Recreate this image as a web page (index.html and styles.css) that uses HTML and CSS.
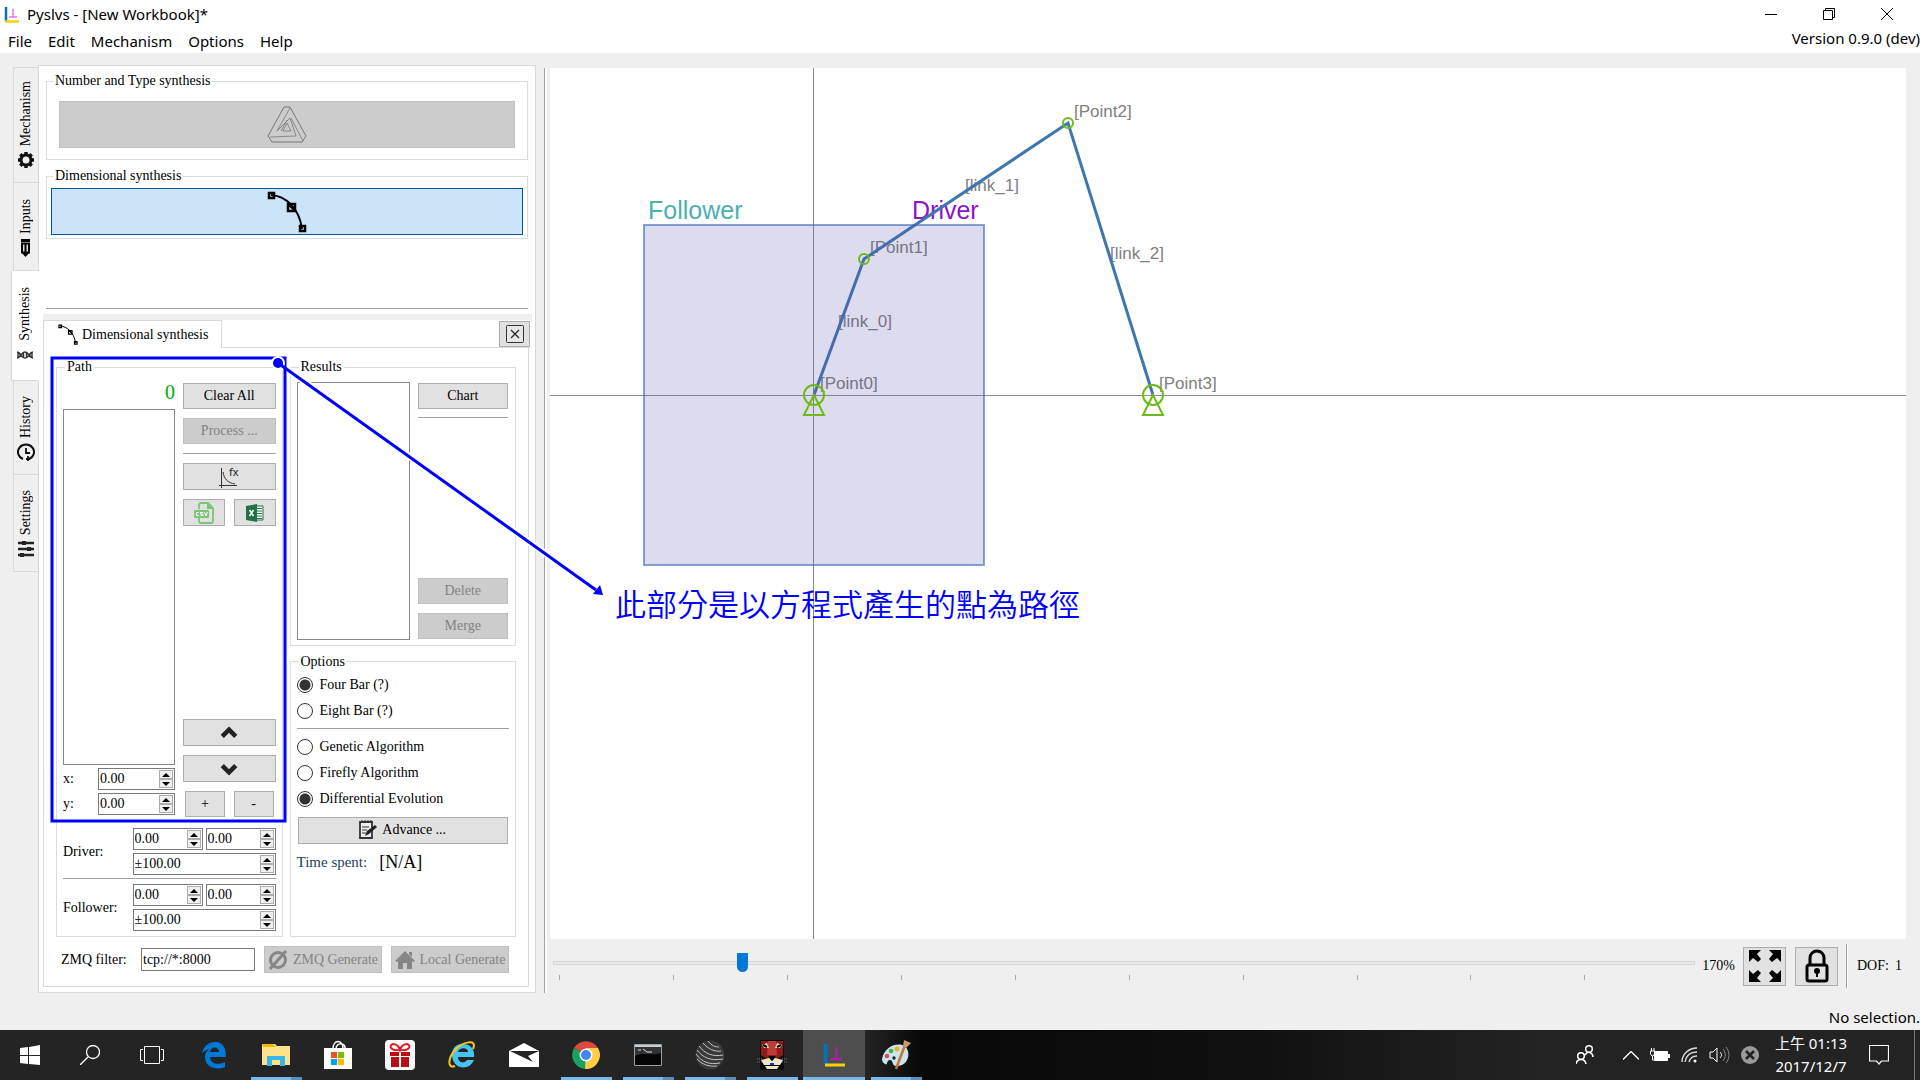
FILE: index.html
```html
<!DOCTYPE html>
<html lang="en">
<head>
<meta charset="utf-8">
<title>Pyslvs - [New Workbook]*</title>
<link rel="stylesheet" href="styles.css">
</head>
<body>
<svg class="defs" width="0" height="0" aria-hidden="true">
  <symbol id="curve" viewBox="0 0 40 42">
    <path d="M4 4C18 5 32 16 35 38" fill="none" stroke="#000" stroke-width="2"/>
    <path d="M2 2h5v5H2zM21 13h7v7h-7zM33 35h5v5h-5z" fill="none" stroke="#000" stroke-width="2.500"/>
    <path d="M21 13l7 7" stroke="#000" stroke-width="2"/>
  </symbol>
  <symbol id="arrow" viewBox="0 0 16 12"><path d="M2 9l6-6 6 6" fill="none" stroke="#222" stroke-width="4"/></symbol>
</svg>

<header class="header">
  <div class="titlebar">
    <svg class="app-icon" viewBox="0 0 16 17"><path d="M2 1v14" stroke="#0b6fb8" stroke-width="2.500"/><path d="M1 15.500h14" stroke="#f5cf0c" stroke-width="2.500"/><path d="M9 3v8M5 11h8" stroke="#f070e8" stroke-width="1.500" fill="none"/></svg>
    <h1 class="title">Pyslvs - [New Workbook]*</h1>
    <div class="window-buttons">
      <button aria-label="Minimize"><svg viewBox="0 0 14 14"><path d="M1 7.500h12" stroke="#000"/></svg></button>
      <button aria-label="Restore"><svg viewBox="0 0 14 14"><path d="M1.500 3.500h9v9h-9zM3.500 3.500v-2h9v9h-2" fill="none" stroke="#000"/></svg></button>
      <button aria-label="Close"><svg viewBox="0 0 14 14"><path d="M1 1l12 12M13 1L1 13" stroke="#000"/></svg></button>
    </div>
  </div>
  <div class="menubar">
    <nav class="menu"><a href="#">File</a><a href="#">Edit</a><a href="#">Mechanism</a><a href="#">Options</a><a href="#">Help</a></nav>
    <span class="version">Version 0.9.0 (dev)</span>
  </div>
</header>

<main class="main">
  <div class="tabs">
    <button class="tab tab-mechanism"><span>Mechanism</span><svg viewBox="0 0 18 18"><circle cx="9" cy="9" r="5" fill="none" stroke="#111" stroke-width="3"/><path d="M9 1v3M9 14v3M1 9h3M14 9h3M3.300 3.300l2 2M12.700 12.700l2 2M3.300 14.700l2-2M12.700 5.300l2-2" stroke="#111" stroke-width="3.500"/></svg></button>
    <button class="tab tab-inputs"><span>Inputs</span><svg viewBox="0 0 18 18"><path d="M4 0h9v3H4z" fill="#000"/><path d="M5 4.500h7v9H5zM8.500 5v9" fill="#ddd" stroke="#000" stroke-width="2"/><path d="M4 13h9l-4.500 5z" fill="#000"/></svg></button>
    <button class="tab tab-synthesis"><span>Synthesis</span><svg viewBox="0 0 18 18"><path d="M1 6c4 0 4 6 8 6s4-6 8-6M1 12c4 0 4-6 8-6s4 6 8 6M2 6v6M4 7v4M7.500 6.500v5M10.500 6.500v5M14 7v4M16 6v6" fill="none" stroke="#333" stroke-width="1.400"/></svg></button>
    <button class="tab tab-history"><span>History</span><svg viewBox="0 0 18 18"><path d="M6 16A8 7.500 0 1 1 12 16" fill="none" stroke="#111" stroke-width="2"/><path d="M9 5v5h4M11 13v5M9 16h4" fill="none" stroke="#111" stroke-width="1.800"/></svg></button>
    <button class="tab tab-settings"><span>Settings</span><svg viewBox="0 0 18 18"><path d="M1 3h16M1 9h16M1 15h16" stroke="#222" stroke-width="2.500"/><path d="M5 1h4v4H5zM10 7h4v4h-4zM3 13h4v4H3z" fill="#222"/></svg></button>
  </div>

  <section class="panel">
    <div class="upper">
      <fieldset class="group group-type"><legend>Number and Type synthesis</legend>
        <button class="btn big" disabled aria-label="Number and Type synthesis"><svg width="40" height="38" viewBox="0 0 40 38" fill="none" stroke="#777"><path d="M17 1h6l16 29-4 6H5l-4-6z"/><path d="M10 25l13-13 6 18-26 1M23 2l-13 23M24 12l12 23M20 17l-4 8h8zM20 14l-6 11" stroke-width=".8"/></svg></button>
      </fieldset>
      <fieldset class="group group-dim"><legend>Dimensional synthesis</legend>
        <button class="btn big active" aria-label="Dimensional synthesis"><svg width="40" height="42"><use href="#curve"/></svg></button>
      </fieldset>
      <hr class="split-h">
    </div>

    <div class="dock">
      <div class="dock-head">
        <button class="dock-tab"><svg width="20" height="21"><use href="#curve"/></svg>Dimensional synthesis</button>
        <button class="dock-close btn" aria-label="Close tab"><svg width="18" height="18" viewBox="0 0 18 18"><rect x=".5" y=".5" width="17" height="17" rx="1" fill="#e8e8e8" stroke="#333"/><path d="M5 5l8 8M13 5l-8 8" stroke="#222" stroke-width="1.200"/></svg></button>
      </div>
      <div class="dock-pane">
        <div class="columns">
          <fieldset class="group path"><legend>Path</legend>
            <div class="path-top">
              <div class="path-list">
                <output class="count">0</output>
                <div class="listbox" role="listbox" aria-label="Path points"></div>
                <div class="coord"><label for="px">x:</label><span class="spin"><input id="px" value="0.00"><span class="arrows"><button aria-label="Up"></button><button aria-label="Down"></button></span></span></div>
                <div class="coord"><label for="py">y:</label><span class="spin"><input id="py" value="0.00"><span class="arrows"><button aria-label="Up"></button><button aria-label="Down"></button></span></span></div>
              </div>
              <div class="buttons">
                <button class="btn">Clear All</button>
                <button class="btn" disabled>Process ...</button>
                <hr>
                <button class="btn tall" aria-label="Formula"><svg width="20" height="22" viewBox="0 0 20 22"><path d="M2.500 2v20M0 19.500h18" stroke="#333"/><path d="M4 6c1 7 5 11 12 12" fill="none" stroke="#333"/><text x="10" y="10" class="glyph">fx</text></svg></button>
                <div class="pair">
                  <button class="btn tall" aria-label="Import CSV"><svg width="20" height="22" viewBox="0 0 20 22"><path d="M5 7V3q0-2 2-2h7l5 5v13q0 2-2 2H7q-2 0-2-2v-3" fill="none" stroke="#7cc576" stroke-width="1.800"/><path d="M13 1v6h6z" fill="#7cc576"/><rect x="0" y="8" width="15" height="8" rx="1" fill="#7cc576"/><path d="M5 10.500H2.500v3H5M9 10.500H6.500V12H9v1.500H6.500M10.500 10l1.500 4 1.500-4" fill="none" stroke="#fff" stroke-width="1"/></svg></button>
                  <button class="btn tall" aria-label="Import Excel"><svg width="20" height="20" viewBox="0 0 20 20"><path d="M10 3h8v14h-8z" fill="#fff" stroke="#217346"/><path d="M12 5.500h5M12 8h5M12 10.500h5M12 13h5M12 15.500h5" stroke="#217346"/><path d="M1 3l11-2v18L1 17z" fill="#217346"/><path d="M4.500 7l4 6M8.500 7l-4 6" stroke="#fff" stroke-width="1.500"/></svg></button>
                </div>
                <span class="spring"></span>
                <button class="btn tall" aria-label="Move up"><svg width="18" height="14"><use href="#arrow"/></svg></button>
                <button class="btn tall" aria-label="Move down"><svg class="flip" width="18" height="14"><use href="#arrow"/></svg></button>
                <div class="pair narrow"><button class="btn">+</button><button class="btn">-</button></div>
              </div>
            </div>
            <div class="range">
              <label for="dx">Driver:</label>
              <div class="range-fields">
                <span class="spin"><input id="dx" value="0.00"><span class="arrows"><button aria-label="Up"></button><button aria-label="Down"></button></span></span>
                <span class="spin"><input aria-label="Driver y" value="0.00"><span class="arrows"><button aria-label="Up"></button><button aria-label="Down"></button></span></span>
                <span class="spin wide"><input aria-label="Driver range" value="±100.00"><span class="arrows"><button aria-label="Up"></button><button aria-label="Down"></button></span></span>
              </div>
            </div>
            <hr>
            <div class="range">
              <label for="fx">Follower:</label>
              <div class="range-fields">
                <span class="spin"><input id="fx" value="0.00"><span class="arrows"><button aria-label="Up"></button><button aria-label="Down"></button></span></span>
                <span class="spin"><input aria-label="Follower y" value="0.00"><span class="arrows"><button aria-label="Up"></button><button aria-label="Down"></button></span></span>
                <span class="spin wide"><input aria-label="Follower range" value="±100.00"><span class="arrows"><button aria-label="Up"></button><button aria-label="Down"></button></span></span>
              </div>
            </div>
          </fieldset>

          <div class="side">
            <fieldset class="group results"><legend>Results</legend>
              <div class="results-body">
                <div class="listbox" role="listbox" aria-label="Results"></div>
                <div class="buttons">
                  <button class="btn">Chart</button>
                  <hr>
                  <span class="spring"></span>
                  <button class="btn" disabled>Delete</button>
                  <button class="btn" disabled>Merge</button>
                </div>
              </div>
            </fieldset>
            <fieldset class="group options"><legend>Options</legend>
              <div class="radios">
                <label><input type="radio" name="bar" checked>Four Bar (?)</label>
                <label><input type="radio" name="bar">Eight Bar (?)</label>
              </div>
              <hr>
              <div class="radios">
                <label><input type="radio" name="alg">Genetic Algorithm</label>
                <label><input type="radio" name="alg">Firefly Algorithm</label>
                <label><input type="radio" name="alg" checked>Differential Evolution</label>
              </div>
              <button class="btn tall advance"><svg width="18" height="20" viewBox="0 0 18 20"><path d="M1 2h12v16H1z" fill="#eee" stroke="#333" stroke-width="1.800"/><path d="M3 0v3M6 0v3M9 0v3M12 0v3M3 7h7M3 10h5M3 13h4" stroke="#333"/><path d="M6 16l2-5 8-6 2 2-8 7z" fill="#222"/></svg>Advance ...</button>
              <div class="time"><span>Time spent:</span><output>[N/A]</output></div>
            </fieldset>
          </div>
        </div>
        <div class="zmq">
          <label for="zmq">ZMQ filter:</label>
          <input id="zmq" value="tcp://*:8000">
          <button class="btn tall" disabled><svg width="20" height="20" viewBox="0 0 20 20"><circle cx="10" cy="10" r="7.500" fill="none" stroke="#868686" stroke-width="3"/><path d="M2 19L18 1" stroke="#868686" stroke-width="3"/></svg>ZMQ Generate</button>
          <button class="btn tall" disabled><svg width="20" height="20" viewBox="0 0 20 20"><path d="M0 11L10 1l10 10-2 1-8-8-8 8zM3 11l7-7 7 7v8h-5v-6H8v6H3zM14 2h3v5l-3-3z" fill="#868686"/></svg>Local Generate</button>
        </div>
      </div>
    </div>
  </section>

  <div class="splitter"></div>

  <section class="work">
    <div class="canvas">
      <svg width="100%" height="100%" class="drawing">
        <path d="M263.500 0V871" stroke="#8c8c8c"/>
        <line x1="0" y1="327.500" x2="100%" y2="327.500" stroke="#8c8c8c"/>
        <text x="98" y="151" class="area follower">Follower</text>
        <text x="362" y="151" class="area driver">Driver</text>
        <g class="names"><text x="270" y="321">[Point0]</text><text x="320" y="185">[Point1]</text><text x="524" y="49">[Point2]</text><text x="609" y="321">[Point3]</text><text x="288" y="259">[link_0]</text><text x="415" y="123">[link_1]</text><text x="560" y="191">[link_2]</text></g>
        <g class="links"><path d="M264 327L314 191L518 55L603 327"/></g>
        <rect x="94" y="157" width="340" height="340" class="region"/>
        <g class="joints"><circle cx="314" cy="191" r="5"/><circle cx="518" cy="55" r="5"/><circle cx="264" cy="327" r="10"/><circle cx="603" cy="327" r="10"/><path d="M264 327l-10 20h20zM603 327l-10 20h20z"/></g>
      </svg>
    </div>
    <div class="view-bar">
      <div class="zoom">
        <input type="range" min="0" max="1000" value="162" aria-label="Zoom">
        <div class="ticks"><i></i><i></i><i></i><i></i><i></i><i></i><i></i><i></i><i></i><i></i></div>
      </div>
      <span class="percent">170%</span>
      <button class="btn view" aria-label="Zoom to fit"><svg width="32" height="32" viewBox="0 0 32 32"><path d="M0 0h12L8 4l4 5-3 3-5-4-4 4zM32 0v12l-4-4-5 4-3-3 4-5-4-4zM0 32V20l4 4 5-4 3 3-4 5 4 4zM32 32H20l4-4-4-5 3-3 5 4 4-4z"/></svg></button>
      <button class="btn view" aria-label="Lock"><svg width="24" height="34" viewBox="0 0 24 34"><rect x="2" y="16" width="20" height="16" rx="2" fill="none" stroke="#000" stroke-width="3"/><path d="M5 16V9a7 7 0 0 1 14 0v7" fill="none" stroke="#000" stroke-width="3"/><circle cx="12" cy="22" r="3"/><path d="M11 23h2v5h-2z"/></svg></button>
      <span class="vline"></span>
      <span class="dof"><span>DOF:</span><span>1</span></span>
    </div>
  </section>
</main>

<div class="status">No selection.</div>

<footer class="taskbar">
  <button class="task sys" aria-label="Start"><svg width="20" height="20" viewBox="0 0 20 20"><path d="M0 3l8-1v8H0zM9 2l11-2v10H9zM0 11h8v8l-8-1zM9 11h11v9L9 19z" fill="#fff"/></svg></button>
  <button class="task sys" aria-label="Search"><svg width="20" height="20" viewBox="0 0 20 20"><circle cx="13" cy="7" r="6.500" fill="none" stroke="#fff" stroke-width="1.300"/><path d="M8 12l-8 8" stroke="#fff" stroke-width="1.300"/></svg></button>
  <button class="task sys view-task" aria-label="Task view"><svg width="24" height="18" viewBox="0 0 24 18"><path d="M4.500.5h15v17h-15zM3 3.500H.5v11H3M21 3.500h2.500v11H21" fill="none" stroke="#fff"/></svg></button>
  <button class="task" aria-label="Edge"><svg width="26" height="28" viewBox="0 0 26 28"><path d="M1 13C2 5 8 1 14 1c8 0 11 6 11 15H9c0 8 10 8 15 5v5C15 30 4 26 4 16c0-5 3-7 5-8-5 1-7 3-8 5zm8-2h9c0-6-8-6-9 0z" fill="#0078d7"/></svg></button>
  <button class="task open many" aria-label="Explorer"><svg width="28" height="24" viewBox="0 0 28 24"><path d="M0 1h13l2 2h13v19H0z" fill="#fde28c"/><path d="M0 1h11l3 3H1z" fill="#f0b90b"/><path d="M5 23V13h18v10h-5v-6h-8v6z" fill="#38b6ea"/></svg></button>
  <button class="task" aria-label="Store"><svg width="30" height="30" viewBox="0 0 30 30"><path d="M10 9c0-10 10-10 10 0M13 9c0-7 10-7 9 0" fill="none" stroke="#fff" stroke-width="1.500"/><path d="M1 8h28v21H1z" fill="#fff"/><path d="M8 12h6v6H8z" fill="#f25022"/><path d="M15 12h6v6h-6z" fill="#7fba00"/><path d="M8 19h6v6H8z" fill="#00a4ef"/><path d="M15 19h6v6h-6z" fill="#ffb900"/></svg></button>
  <button class="task" aria-label="Gift"><svg width="30" height="30" viewBox="0 0 30 30"><rect width="30" height="30" rx="4" fill="#fff"/><path d="M5 12h9v4H5zM16 12h9v4h-9zM6 17h8v10H6zM16 17h8v10h-8z" fill="#b80f14"/><path d="M15 10C4 11 4 5 8 4c4 0 6 3 7 6 1-3 3-6 7-6 4 1 4 7-7 6z" fill="none" stroke="#e01c20" stroke-width="2"/></svg></button>
  <button class="task" aria-label="Internet Explorer"><svg width="30" height="30" viewBox="0 0 30 30"><path d="M5 15C5 7 10 4 16 4c8 0 12 6 11 13H11c0 6 7 7 9 3h7c-5 12-22 9-22-5zm6-3h10c0-5-9-5-10 0z" fill="#45c3f3"/><path d="M26 9C31-2 15 2 8 10S0 29 8 26" fill="none" stroke="#f8c51a" stroke-width="2"/></svg></button>
  <button class="task" aria-label="Mail"><svg width="30" height="24" viewBox="0 0 30 24"><path d="M0 8L15 0l15 8v16H0z" fill="#fff"/><path d="M0 8h30l-11 5 5 6L1 8z" fill="#232323"/></svg></button>
  <button class="task open" aria-label="Chrome"><svg width="28" height="28" viewBox="0 0 28 28"><path d="M14 14L2 7a14 14 0 0 1 24 0z" fill="#dd4b3e"/><path d="M14 14L2 7a14 14 0 0 0 11 21l6-11z" fill="#1aa260"/><path d="M14 14L13 28A14 14 0 0 0 26 7H14z" fill="#ffce44"/><circle cx="14" cy="14" r="6.500" fill="#fff"/><circle cx="14" cy="14" r="5" fill="#4285f4"/></svg></button>
  <button class="task open many" aria-label="Terminal"><svg width="28" height="22" viewBox="0 0 28 22"><path d="M.5.5h27v21H.5z" fill="#050505" stroke="#9aa3a8"/><path d="M1 2h26" stroke="#c5d0d6" stroke-width="2"/><path d="M1 21V12C8 8 18 12 27 9V3H1z" fill="#333"/><path d="M4 6h3M9 5l4 3h5" stroke="#ddd" fill="none"/></svg></button>
  <button class="task open many" aria-label="Sphere"><svg width="30" height="30" viewBox="0 0 30 30"><circle cx="15" cy="15" r="14.500" fill="#3a3a3a"/><path d="M8 3c5 6 12 9 18 8M4 6c6 8 14 11 24 9M2 10c6 8 14 11 26 9M1 14c6 8 13 11 24 9M2 19c5 5 11 8 20 7M13 1c4 5 7 6 11 6" fill="none" stroke="#c4c4c4"/></svg></button>
  <button class="task open" aria-label="Tiger"><svg width="30" height="30" viewBox="0 0 30 30"><path d="M3 0h24v30H3z" fill="#080808"/><path d="M4 1h22v14l-6 4H10l-6-4z" fill="#8f1d1d"/><path d="M11 1h8l1 14h-10z" fill="#bd3b39"/><path d="M5 5l5-2 2 5H7zM25 5l-5-2-2 5h5z" fill="#e8dcae"/><path d="M6 5l4 2M24 5l-4 2" stroke="#000" stroke-width="2"/><path d="M4 20l8-2 3 3 3-3 8 2-3 5H7zM8 26h14l-2 3H10z" fill="#eee6c8"/><path d="M11 16h8l-4 5z"/><path d="M13 23h4v2h-4z" fill="#13c"/><path d="M0 19h5M0 22h5M25 19h5M25 22h5" stroke="#777" stroke-dasharray="1 1"/></svg></button>
  <button class="task open current many" aria-label="Pyslvs"><svg width="24" height="26" viewBox="0 0 24 26"><path d="M3.500 2v20" stroke="#0670b8" stroke-width="4"/><path d="M14.500 5v12M8 17h12" stroke="#b21cae" stroke-width="2"/><path d="M3 23h20" stroke="#f5cf0c" stroke-width="3"/></svg></button>
  <button class="task open many" aria-label="Paint"><svg width="30" height="30" viewBox="0 0 30 30"><path d="M1 19C3 9 12 3 21 5c10 3 8 20-4 21-7 1-4-6-8-6s-2 6-5 4c-2-1-3-3-3-5z" fill="#c9e4f2"/><circle cx="6" cy="16" r="2.300" fill="#dc4a4a"/><circle cx="10" cy="11" r="2.300" fill="#45ad46"/><circle cx="16" cy="9" r="2.500" fill="#f5ac1e"/><circle cx="13" cy="18" r="1.700" fill="#222"/><path d="M15 29L24 5" stroke="#cc7429" stroke-width="2.500"/><path d="M22 6l1-6 7 3-5 5z" fill="#c69c6d"/></svg></button>
  <span class="spring"></span>
  <div class="tray">
    <svg class="people" width="18" height="20" viewBox="0 0 18 20" fill="none" stroke="#fff" stroke-width="1.500"><circle cx="13" cy="4" r="3.300"/><circle cx="5" cy="11" r="3.300"/><path d="M0 19c1-6 9-6 10 0M9 10c3-5 8-2 8 2"/></svg>
    <svg class="chev" width="16" height="9" viewBox="0 0 16 9" fill="none" stroke="#fff" stroke-width="1.300"><path d="M0 8.500l8-8 8 8"/></svg>
    <svg width="20" height="14" viewBox="0 0 20 14"><path d="M4.500 3.500h13v9h-13z" fill="#fff" stroke="#fff"/><path d="M18 6h2v4h-2z" fill="#fff"/><path d="M.5 3h4v3L3 8H2L.5 6zM1.500 0v3M4 0v3M2.500 8v4h2" fill="#232323" stroke="#fff"/></svg>
    <svg width="17" height="16" viewBox="0 0 17 16" fill="none" stroke="#ddd" stroke-width="1.400"><path d="M1 15C1 7 8 1 16 1M4 15C5 9 9 5 16 5M8 15c1-4 4-6 8-6"/><circle cx="14" cy="14" r="1.500" fill="#fff" stroke="none"/></svg>
    <svg width="21" height="18" viewBox="0 0 21 18" fill="none" stroke="#fff"><path d="M1 6h3l4-4v14l-4-4H1z"/><path d="M11 6c2 2 2 4 0 6"/><path d="M14 3c3 4 3 8 0 12M17 1c4 5 4 11 0 16" stroke="#888"/></svg>
    <svg width="18" height="18" viewBox="0 0 18 18"><circle cx="9" cy="9" r="9" fill="#9a9a9a"/><path d="M5 5l8 8M13 5l-8 8" stroke="#222" stroke-width="2.500"/></svg>
    <div class="clock"><span>上午 01:13</span><span>2017/12/7</span></div>
    <svg class="notice" width="20" height="20" viewBox="0 0 20 20"><path d="M.5.500h19v15.500h-7l-2.500 3-2.500-3h-7z" fill="none" stroke="#fff" stroke-width="1.200"/></svg>
  </div>
  <span class="show-desktop"></span>
</footer>

<svg class="annotation" width="1100" height="840">
  <path d="M278 363L594 588" stroke="#fff" stroke-width="7"/>
  <rect x="52" y="358" width="233" height="463" fill="none" stroke="#00f" stroke-width="3"/>
  <circle cx="278" cy="363" r="7" fill="#fff"/>
  <path d="M278 363L596 590" stroke="#00f" stroke-width="3"/>
  <circle cx="278" cy="363" r="5" fill="#00f"/>
  <path d="M603 595l-10-1 7-9z" fill="#00f"/>
  <text x="615" y="616" class="note">此部分是以方程式產生的點為路徑</text>
</svg>
</body>
</html>
```
FILE: styles.css
```css
* { box-sizing: border-box; }
body {
  margin: 0;
  min-height: 100vh;
  display: flex;
  flex-direction: column;
  position: relative;
  background: #efefef;
  color: #000;
  font: 14px/18px "Liberation Serif", serif;
}
button, input { font: inherit; color: inherit; }
button { padding: 0; border: 0; background: none; }
svg { flex: none; display: block; }
.defs { position: absolute; }
.spring { flex: 1; }
hr { width: 100%; height: 1px; margin: 0; border: 0; background: #a0a0a0; }

/* Title and menu */
.header {
  background: #fff;
  height: 53px;
  font: 15px/20px "Noto Sans", sans-serif;
}
.titlebar { display: flex; align-items: center; height: 28px; padding-left: 4px; }
.app-icon { width: 16px; height: 17px; }
.title { flex: 1; margin: 0 0 0 7px; font-size: 15px; font-weight: 400; }
.window-buttons { display: flex; padding-right: 4px; }
.window-buttons button { width: 58px; height: 28px; display: grid; place-items: center; }
.window-buttons svg { width: 14px; height: 14px; }
.menubar { display: flex; align-items: flex-start; justify-content: space-between; }
.menu { display: flex; gap: 16px; padding: 3px 8px; }
.menu a { color: inherit; text-decoration: none; }

/* Main area */
.main { flex: 1; display: flex; padding: 12px 14px 12px 11px; }
.tabs { display: flex; flex-direction: column; width: 28px; padding-top: 2px; margin-right: -1px; position: relative; }
.tab {
  display: flex;
  flex-direction: column;
  justify-content: flex-end;
  align-items: center;
  gap: 5px;
  margin-left: 2px;
  padding-bottom: 13px;
  background: #efefef;
  border: 1px solid #d9d9d9;
  border-top-width: 0;
}
.tab span { writing-mode: vertical-rl; transform: rotate(180deg); line-height: 18px; }
.tab svg { width: 18px; height: 18px; }
.tab-mechanism { height: 116px; border-top-width: 1px; }
.tab-inputs { height: 88px; }
.tab-synthesis { height: 110px; margin-left: 0; background: #fff; border-right-color: #fff; padding-bottom: 16px; }
.tab-history { height: 94px; }
.tab-settings { height: 97px; }

.panel {
  display: flex;
  flex-direction: column;
  width: 498px;
  padding: 6px 3px 5px 4px;
  background: #fff;
  border: 1px solid #d9d9d9;
}
.upper { padding: 0 4px 5px 3px; }
.group { min-width: 0; margin: 0; border: 1px solid #dcdcdc; }
.group legend { margin-left: 2px; padding: 0 2px; line-height: 18px; }
.group-type { padding: 11px 12px; }
.group-type legend { margin-left: -6px; }
.group-dim { margin-top: 7px; padding: 3px 4px; }
.split-h { margin-top: 69px; }

.btn {
  display: flex;
  align-items: center;
  justify-content: center;
  gap: 5px;
  height: 26px;
  background: #e1e1e1;
  border: 1px solid #adadad;
}
.btn:disabled { background: #ccc; border-color: #bfbfbf; color: #838383; }
.btn.tall { height: 27px; }
.btn.big { width: 100%; height: 47px; }
.btn.active { background: #cce4f7; border-color: #005499; }

/* Docked tab */
.dock { flex: 1; display: flex; flex-direction: column; padding: 6px 3px 0 0; background: linear-gradient(#efefef 6px, #fff 6px); }
.dock-head { display: flex; justify-content: space-between; height: 28px; margin-right: -1px; position: relative; margin-bottom: -1px; }
.dock-tab {
  display: flex;
  align-items: center;
  gap: 4px;
  width: 179px;
  padding-left: 14px;
  background: #fff;
  border: 1px solid #d9d9d9;
  border-bottom: 0;
}
.dock-close { width: 31px; margin-top: 1px; }
.dock-pane {
  flex: 1;
  display: flex;
  flex-direction: column;
  gap: 9px;
  padding: 10px 12px 13px;
  border: 1px solid #d9d9d9;
}
.columns { flex: 1; display: grid; grid-template-columns: minmax(0, 1fr) minmax(0, 1fr); gap: 7px; }
.path { display: flex; flex-direction: column; padding: 7px 6px 5px; }
.path-top { flex: 1; display: flex; gap: 8px; margin-bottom: 11px; }
.path-list { width: 112px; display: flex; flex-direction: column; gap: 3px; padding-bottom: 2px; }
.count { height: 23px; text-align: right; font-size: 20px; line-height: 18px; color: #00aa00; }
.listbox { flex: 1; background: #fff; border: 1px solid #828790; }
.buttons { flex: 1; display: flex; flex-direction: column; gap: 9px; }
.pair { display: grid; grid-template-columns: 1fr 1fr; gap: 9px; }
.narrow { padding: 0 2px; }
.glyph { font: 11px "Noto Sans", sans-serif; fill: #222; }
.coord { display: flex; justify-content: space-between; align-items: center; }
.coord .spin { width: 77px; }
.flip { transform: rotate(180deg); }

.spin { display: flex; height: 22px; background: #fff; border: 1px solid #7a7a7a; }
.spin input { flex: 1; width: 0; min-width: 0; padding: 0 1px; border: 0; background: none; }
.arrows { display: flex; flex-direction: column; padding: 1px; width: 16px; }
.arrows button { flex: 1; display: grid; place-items: center; background: #f0f0f0; border: 1px solid #adadad; }
.arrows button::before { content: ""; border: 4px solid transparent; border-top-width: 0; border-bottom-color: #000; }
.arrows button:last-child::before { transform: rotate(180deg); }
.range { display: flex; align-items: center; justify-content: space-between; }
.range-fields { display: grid; grid-template-columns: 1fr 1fr; gap: 3px; width: 143px; }
.wide { grid-column: span 2; }
.range + hr { margin: 3px 0 5px; }

.side { display: flex; flex-direction: column; gap: 7px; }
.side .group { flex: 1; }
.results { display: flex; flex-direction: column; padding: 6px 6px 5px; }
.results-body { flex: 1; display: grid; grid-template-columns: 113px 1fr; gap: 7px; }
.results-body .buttons { padding: 1px; }
.results-body hr { margin-top: -1px; }
.options { display: flex; flex-direction: column; padding: 4px 6px; }
.radios { display: flex; flex-direction: column; gap: 6px; }
.radios label { display: flex; align-items: center; gap: 7px; height: 20px; }
.radios input {
  appearance: none;
  width: 16px;
  height: 16px;
  margin: 0;
  border: 1px solid #333;
  border-radius: 50%;
  background: #fff;
}
.radios input:checked { background: radial-gradient(circle, #333 5px, #fff 6px); }
.options hr { margin: 7px 0 8px; }
.advance { margin: 8px 1px 6px; }
.time { display: flex; align-items: center; gap: 12px; font-size: 15px; line-height: 24px; }
.time span { color: #24405f; }
.time output { font-size: 18px; }
.zmq { display: flex; align-items: center; padding-left: 5px; padding-right: 7px; }
.zmq label { width: 80px; }
.zmq input { width: 114px; height: 23px; margin-right: 9px; padding: 0 1px; border: 1px solid #7a7a7a; }
.zmq .btn { flex: 1; }
.zmq .btn + .btn { margin-left: 9px; }

.splitter { width: 14px; margin-top: 3px; background: linear-gradient(90deg, transparent 8px, #a0a0a0 8px 9px, #fff 9px 11px, transparent 11px); }

/* Drawing area */
.work { flex: 1; min-width: 0; display: flex; flex-direction: column; padding-top: 3px; }
.canvas { flex: 1; min-height: 0; background: #fff; }
.drawing { height: 100%; }
.links path { fill: none; stroke: #3f76b0; stroke-width: 3; }
.names { fill: #808080; font: 17px "Liberation Sans", sans-serif; }
.area { font: 25px "Liberation Sans", sans-serif; }
.follower { fill: #4bb1ae; }
.driver { fill: #8c13c8; }
.region { fill: rgba(85, 75, 170, .2); stroke: rgba(60, 100, 180, .6); stroke-width: 2; }
.joints { fill: none; stroke: #6cbb16; stroke-width: 2; }

.view-bar { display: flex; align-items: center; height: 54px; }
.zoom { flex: 1; padding: 0 0 0 3px; }
.zoom input { appearance: none; display: block; width: 100%; height: 20px; margin: 0; background: none; }
.zoom input::-webkit-slider-runnable-track { height: 4px; background: #e7eaea; border: 1px solid #d6d6d6; }
.zoom input::-webkit-slider-thumb { appearance: none; width: 11px; height: 19px; margin-top: -9px; background: #0078d7; border-radius: 0 0 6px 6px; }
.ticks { display: grid; grid-template-columns: repeat(10, 1fr); height: 5px; margin: 2px -3px 0 6px; }
.ticks i { border-left: 1px solid #a8a89c; }
.percent { margin: 0 8px 0 7px; }
.view { width: 43px; height: 39px; }
.view + .view { margin-left: 9px; }
.vline { width: 2px; height: 44px; margin: 0 9px 0 8px; border-left: 1px solid #a0a0a0; background: #fff; }
.dof { display: flex; justify-content: space-between; width: 45px; margin-right: 4px; }
.status { height: 25px; text-align: right; font: 15px/25px "Noto Sans", sans-serif; }

/* Taskbar */
.taskbar { display: flex; height: 50px; background: linear-gradient(90deg, #242424 45%, #080808 48%, #101010 65%, #232323 80%); color: #fff; }
.task { position: relative; width: 62px; display: grid; place-items: center; }
.sys { width: 60px; }
.view-task { width: 63px; }
.open::after { content: ""; position: absolute; left: 6px; right: 5px; bottom: 0; height: 3px; background: #76b9ed; }
.many::after { background: linear-gradient(90deg, #76b9ed 40px, #5a8fbe 40px); }
.current { background: #4e4e4e; }
.current::after { left: 0; right: 0; background: #76b9ed; }
.tray { display: flex; align-items: center; gap: 11px; padding-right: 25px; font: 15px/23px "Noto Sans", "Noto Sans CJK TC", sans-serif; }
.people { margin-right: 18px; }
.clock { display: flex; flex-direction: column; align-items: center; width: 82px; }
.notice { margin-left: 6px; }
.show-desktop { width: 6px; border-left: 1px solid #777; }

/* Callout drawn over the window */
.annotation { position: absolute; top: 0; left: 0; pointer-events: none; }
.note { fill: #00f; font: 350 31px "Noto Sans CJK TC", sans-serif; }
```
